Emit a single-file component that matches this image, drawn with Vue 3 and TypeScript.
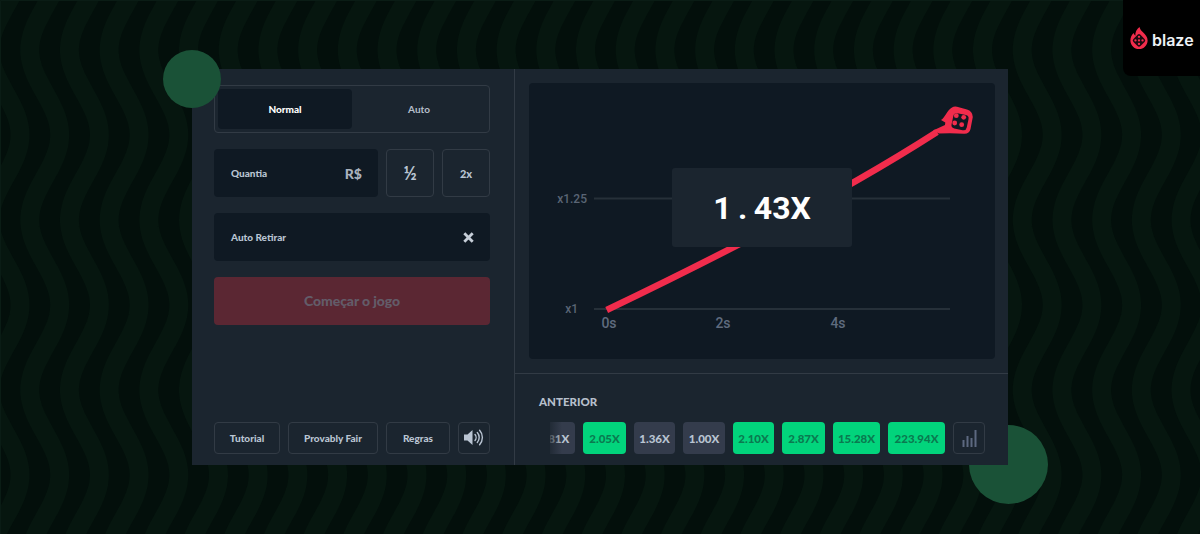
<script setup lang="ts">
import { computed } from 'vue';

interface Round {
  label: string;
  won: boolean;
  width: number;
}

const rounds: Round[] = [
  { label: '1.81X', won: false, width: 42 },
  { label: '2.05X', won: true, width: 43 },
  { label: '1.36X', won: false, width: 41 },
  { label: '1.00X', won: false, width: 42 },
  { label: '2.10X', won: true, width: 41 },
  { label: '2.87X', won: true, width: 43 },
  { label: '15.28X', won: true, width: 47 },
  { label: '223.94X', won: true, width: 57 },
];

// background stripes, one sine line per column, stroked so the band keeps its width
const wavePaths = computed(() => {
  const paths: string[] = [];
  for (let i = -2; i < 33; i++) {
    const x0 = 5 + i * 39.7;
    const points: string[] = [];
    for (let y = -4; y <= 540; y += 4) {
      const x = x0 + 15 * Math.sin((2 * Math.PI * (y - 262.5)) / 170);
      points.push(`${x.toFixed(1)} ${y}`);
    }
    paths.push(`M${points.join('L')}`);
  }
  return paths;
});
</script>

<template>
  <div class="page">
    <svg class="waves" width="1200" height="534" viewBox="0 0 1200 534">
      <path v-for="(d, i) in wavePaths" :key="i" :d="d" fill="none" stroke="#06160f" stroke-width="19" />
      <path d="M0.500 534V0.500H1200" fill="none" stroke="#0a1c15" />
    </svg>

    <div class="logo">
      <svg width="18" height="22" viewBox="0 0 18 23">
        <path d="M9.500 0c.6 2.600 1.900 3.700 3.400 5.300C15.800 8.200 18 10.700 18 14c0 5-4 9-9 9s-9-4-9-9c0-3 1.400-5.600 3.400-7.600.3 1.300.9 2.100 1.800 2.700C4.800 5.500 6.700 2 9.500 0z" fill="#f12c4c" />
        <rect x="3.800" y="8.800" width="10.400" height="10.400" rx="2.200" transform="rotate(45 9 14)" fill="#1b0a10" />
        <circle cx="9" cy="10.300" r="1.200" fill="#f12c4c" />
        <circle cx="9" cy="17.700" r="1.200" fill="#f12c4c" />
        <circle cx="5.300" cy="14" r="1.200" fill="#f12c4c" />
        <circle cx="12.700" cy="14" r="1.200" fill="#f12c4c" />
        <circle cx="9" cy="14" r="1.200" fill="#f12c4c" />
      </svg>
      <span class="logo-name">blaze</span>
    </div>

    <div class="stage">
      <div class="blob blob-top"></div>
      <div class="blob blob-bottom"></div>

      <div class="panel">
        <section class="controls">
          <div class="tabs">
            <button class="tab tab-active">Normal</button>
            <button class="tab">Auto</button>
          </div>

          <div class="amount-row">
            <div class="field amount">
              <span>Quantia</span>
              <strong class="currency">R$</strong>
            </div>
            <button class="square half">½</button>
            <button class="square">2x</button>
          </div>

          <div class="field">
            <span>Auto Retirar</span>
            <svg width="11" height="11" viewBox="0 0 11 11">
              <path d="M1.300 1.300l8.400 8.400M9.700 1.300l-8.400 8.400" stroke="#c6ced8" stroke-width="2.800" />
            </svg>
          </div>

          <button class="start">Começar o jogo</button>

          <div class="links">
            <button class="link link-tutorial">Tutorial</button>
            <button class="link link-fair">Provably Fair</button>
            <button class="link link-rules">Regras</button>
            <button class="link link-sound" aria-label="Som">
              <svg width="20" height="17" viewBox="0 0 20 17">
                <path d="M0 5.500h3.500L8.500 1v15L3.500 11.500H0z" fill="#b9c4d2" />
                <path d="M11 5.500c1.400 1.600 1.400 4.400 0 6M13.300 3.500c2.500 2.800 2.500 7.200 0 10M15.600 1.300c3.700 4 3.700 10.400 0 14.400" fill="none" stroke="#b9c4d2" stroke-width="1.400" stroke-linecap="round" />
              </svg>
            </button>
          </div>
        </section>

        <section class="game">
          <div class="chart">
            <svg class="plot" width="466" height="276" viewBox="0 0 466 276">
              <line x1="65" y1="115.500" x2="421" y2="115.500" stroke="#263039" stroke-width="2" />
              <line x1="65" y1="226" x2="421" y2="226" stroke="#263039" stroke-width="2" />
              <text class="axis" x="58" y="119.500" text-anchor="end">x1.25</text>
              <text class="axis" x="49" y="229.500" text-anchor="end">x1</text>
              <text class="axis tick" x="80" y="245">0s</text>
              <text class="axis tick" x="194" y="245">2s</text>
              <text class="axis tick" x="309" y="245">4s</text>
              <path d="M77.700 227C180 178 310 112 408 49" fill="none" stroke="#f12c4c" stroke-width="6.500" />
              <path d="M412 37C416 35 418 27 423 24.500Q425 23 428 23.700L438 26.500Q443.500 28 443.800 34L441.500 46Q440.500 51 435 50.800L421 50.300L410 50.500L404 47.500L416 42L416.300 39.500Z" fill="#f12c4c" />
              <rect x="423.300" y="31" width="15.500" height="15.500" rx="3.500" transform="rotate(12 431 38.700)" fill="#0f1923" />
              <circle cx="427.300" cy="32.700" r="2.400" fill="#f12c4c" />
              <circle cx="434.700" cy="34.300" r="2.400" fill="#f12c4c" />
              <circle cx="425.700" cy="40" r="2.400" fill="#f12c4c" />
              <circle cx="432.700" cy="41.700" r="2.400" fill="#f12c4c" />
            </svg>
            <div class="multiplier"><span class="multiplier-lead">1.</span>43X</div>
          </div>

          <div class="history">
            <h3>ANTERIOR</h3>
            <div class="history-row">
              <div class="chips">
                <div
                  v-for="round in rounds"
                  :key="round.label"
                  class="chip"
                  :class="{ 'chip-won': round.won }"
                  :style="{ width: round.width + 'px' }"
                >{{ round.label }}</div>
                <div class="chips-fade"></div>
              </div>
              <button class="link stats" aria-label="Estatísticas">
                <svg width="15" height="18" viewBox="0 0 15 18">
                  <path d="M1.500 11v7M5.500 7v11M9.500 9v9M13.500 1v17" stroke="#5d6980" stroke-width="2" />
                </svg>
              </button>
            </div>
          </div>
        </section>
      </div>
    </div>
  </div>
</template>

<style>
html,
body {
  margin: 0;
  background: #030f0b;
}
</style>

<style scoped>
.page {
  position: relative;
  width: 1200px;
  height: 534px;
  overflow: hidden;
  background: #030f0b;
  display: flex;
  align-items: center;
  justify-content: center;
  font-family: Lato, "Open Sans", sans-serif;
}

.waves {
  position: absolute;
  inset: 0;
}

.logo {
  position: absolute;
  top: 0;
  right: 0;
  width: 77px;
  height: 76px;
  padding: 0 6px 0 7px;
  box-sizing: border-box;
  background: #000;
  border-bottom-left-radius: 8px;
  display: flex;
  align-items: center;
  gap: 4px;
  color: #eef2f6;
  font: 600 16px Inter, sans-serif;
}

.logo-name {
  margin-top: 3px;
}

.stage {
  position: relative;
  width: 816px;
  height: 396px;
}

.blob {
  position: absolute;
  border-radius: 50%;
  background: #1a5237;
}

.blob-top {
  left: -29px;
  top: -19px;
  width: 58px;
  height: 58px;
  z-index: 2;
}

.blob-bottom {
  right: -40px;
  bottom: -39px;
  width: 79px;
  height: 79px;
}

.panel {
  position: relative;
  height: 100%;
  display: flex;
  background: #1b252f;
}

button {
  font-family: inherit;
  background: none;
  border: 0;
  padding: 0;
  margin: 0;
}

.controls {
  width: 323px;
  flex: none;
  box-sizing: border-box;
  padding: 16px 24px 11px 22px;
  border-right: 1px solid #323b45;
  display: flex;
  flex-direction: column;
  gap: 16px;
}

.tabs {
  height: 48px;
  flex: none;
  box-sizing: border-box;
  padding: 3px;
  border: 1px solid #323b45;
  border-radius: 4px;
  display: flex;
}

.tab {
  flex: 1;
  border-radius: 4px;
  font-size: 10px;
  font-weight: 700;
  color: #b6bfcb;
}

.tab-active {
  background: #0f1923;
  color: #fff;
  font-weight: 900;
}

.amount-row {
  display: flex;
  flex: none;
  gap: 8px;
}

.field {
  flex: none;
  height: 48px;
  box-sizing: border-box;
  padding: 0 17px;
  background: #0f1923;
  border-radius: 4px;
  display: flex;
  align-items: center;
  justify-content: space-between;
  font-size: 10px;
  font-weight: 900;
  color: #b9c4d2;
}

.amount {
  flex: 1;
}

.field svg {
  margin-right: -1px;
}

.currency {
  font-size: 14px;
  font-weight: 900;
  color: #aab2bd;
  margin-right: -1px;
}

.square {
  width: 48px;
  height: 48px;
  border: 1px solid #323b45;
  border-radius: 4px;
  font-size: 11px;
  font-weight: 900;
  color: #b9c4d2;
}

.half {
  font-size: 18px;
  font-weight: 700;
}

.start {
  height: 48px;
  flex: none;
  padding-bottom: 2px;
  background: #5b2733;
  border-radius: 4px;
  font-size: 14px;
  font-weight: 900;
  letter-spacing: -0.1px;
  color: #635c69;
}

.links {
  margin-top: auto;
  display: flex;
  gap: 8px;
}

.link {
  height: 32px;
  box-sizing: border-box;
  padding-bottom: 1px;
  border: 1px solid #323b45;
  border-radius: 4px;
  display: flex;
  align-items: center;
  justify-content: center;
  font-size: 10px;
  font-weight: 900;
  color: #b9c4d2;
}

.link-tutorial {
  width: 66px;
}

.link-fair {
  width: 90px;
}

.link-rules {
  width: 64px;
}

.link-sound {
  width: 32px;
}

.game {
  flex: 1;
  display: flex;
  flex-direction: column;
}

.chart {
  position: relative;
  height: 276px;
  margin: 14px 13px 14px 14px;
  background: #0f1923;
  border-radius: 4px;
}

.plot {
  display: block;
}

.axis {
  font: 500 12px Roboto, sans-serif;
  fill: #5a6575;
}

.tick {
  font-size: 14px;
  fill: #5f6b7e;
  text-anchor: middle;
}

.multiplier {
  position: absolute;
  left: 143px;
  top: 85px;
  width: 180px;
  height: 79px;
  background: #1b252f;
  border-radius: 3px;
  display: flex;
  align-items: center;
  justify-content: center;
  font: 700 32px Roboto, sans-serif;
  color: #fff;
}

.multiplier-lead {
  letter-spacing: 6.500px;
}

.history {
  flex: 1;
  border-top: 1px solid #323b45;
  padding: 20px 23px 0 24px;
}

h3 {
  margin: 0 0 13px;
  font-size: 11.500px;
  line-height: 15px;
  font-weight: 900;
  color: #b6bfcb;
}

.history-row {
  display: flex;
  justify-content: flex-end;
  gap: 8px;
}

.chips {
  position: relative;
  width: 395px;
  overflow: hidden;
  display: flex;
  justify-content: flex-end;
  gap: 8px;
}

.chips-fade {
  position: absolute;
  left: 0;
  top: 0;
  bottom: 0;
  width: 12px;
  background: linear-gradient(90deg, rgba(27, 37, 47, 0.75), rgba(27, 37, 47, 0));
}

.chip {
  flex: none;
  box-sizing: border-box;
  height: 32px;
  background: #343c4c;
  border-radius: 4px;
  display: flex;
  align-items: center;
  justify-content: center;
  font-size: 11.500px;
  font-weight: 900;
  color: #b9c4d2;
}

.chip-won {
  background: #02d47c;
  color: #0a7a50;
}

.stats {
  flex: none;
  width: 32px;
}
</style>
